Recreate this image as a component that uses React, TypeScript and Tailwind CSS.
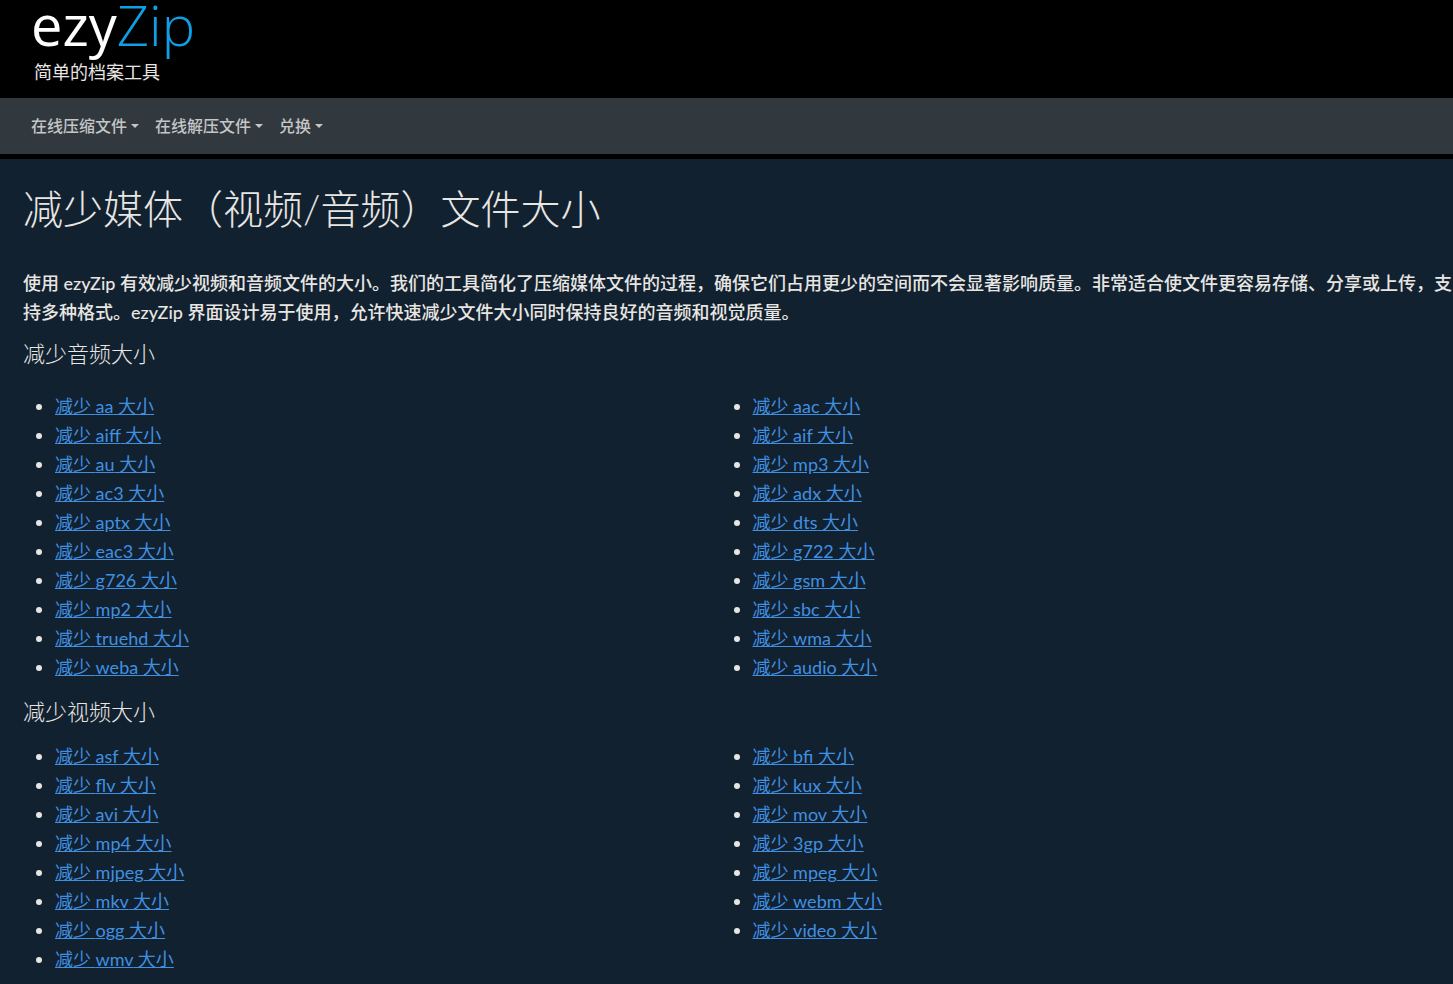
const audioFormats = [
  "aa", "aac", "aiff", "aif", "au", "mp3", "ac3", "adx", "aptx", "dts",
  "eac3", "g722", "g726", "gsm", "mp2", "sbc", "truehd", "wma", "weba", "audio",
];

const videoFormats = [
  "asf", "bfi", "flv", "kux", "avi", "mov", "mp4", "3gp",
  "mjpeg", "mpeg", "mkv", "webm", "ogg", "video", "wmv",
];

const menus = ["在线压缩文件", "在线解压文件", "兑换"];

function FormatList({ formats }: { formats: string[] }) {
  return (
    <ul className="grid list-disc grid-cols-2 gap-x-[18px] pr-[21px] pl-8">
      {formats.map((format) => (
        <li key={format}>
          <a href={`#${format}`} className="text-[#4090e2] underline">
            减少 {format} 大小
          </a>
        </li>
      ))}
    </ul>
  );
}

export default function App() {
  return (
    <div className="min-h-screen bg-[#12212f] font-['Lato','Noto_Sans_CJK_SC',sans-serif] text-lg leading-[29px] text-[#e8e6e3]">
      <header className="h-[98px] bg-black px-[31px]">
        <a href="#home" className="inline-block">
          <span className="block font-['Open_Sans',sans-serif] text-[56px] leading-[48px] text-white">
            ezy<span className="font-light text-[#0f9fe4]">Zip</span>
          </span>
          <span className="mt-3 block pl-[3px] leading-6">简单的档案工具</span>
        </a>
      </header>
      <nav className="flex h-[61px] items-center gap-4 border-b-[5px] border-black bg-[#31383e] px-[31px] text-base text-[#c4c6c7]">
        {menus.map((menu) => (
          <button key={menu} type="button" className="flex items-center gap-1 font-medium">
            {menu}
            <span className="border-x-4 border-t-4 border-x-transparent border-t-current" />
          </button>
        ))}
      </nav>
      <main className="pl-[23px]">
        <h1 className="pt-[26px] text-[40px] leading-[48px] font-light">减少媒体（视频/音频）文件大小</h1>
        <p className="mt-9 font-medium">
          使用 ezyZip 有效减少视频和音频文件的大小。我们的工具简化了压缩媒体文件的过程，确保它们占用更少的空间而不会显著影响质量。非常适合使文件更容易存储、分享或上传，支持多种格式。ezyZip 界面设计易于使用，允许快速减少文件大小同时保持良好的音频和视觉质量。
        </p>
        <h2 className="mt-3 mb-[23px] text-[22px] leading-[30px] font-light">减少音频大小</h2>
        <FormatList formats={audioFormats} />
        <h2 className="my-[15px] text-[22px] leading-[30px] font-light">减少视频大小</h2>
        <FormatList formats={videoFormats} />
      </main>
    </div>
  );
}
